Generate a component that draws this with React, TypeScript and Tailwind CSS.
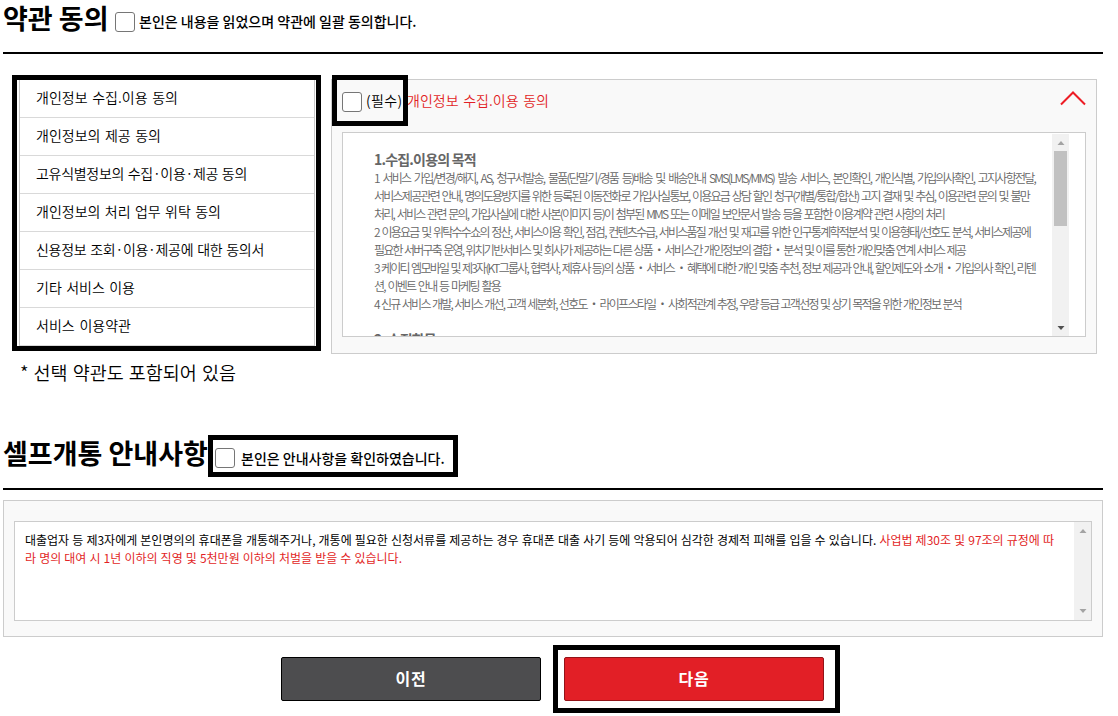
import { useState } from 'react';
import clsx from 'clsx';

const terms = [
  { label: '개인정보 수집.이용 동의', width: 'w-[142px]' },
  { label: '개인정보의 제공 동의', width: 'w-[125px]' },
  { label: '고유식별정보의 수집·이용·제공 동의', width: 'w-[211px] tracking-[-0.3px]' },
  { label: '개인정보의 처리 업무 위탁 동의', width: 'w-[185px]' },
  { label: '신용정보 조회·이용·제공에 대한 동의서', width: 'w-[228px] tracking-[-0.3px]' },
  { label: '기타 서비스 이용', width: 'w-[99px]' },
  { label: '서비스 이용약관', width: 'w-[95px]' },
];

const purposeLines = [
  { text: '1 서비스 가입/변경/해지, AS, 청구서발송, 물품(단말기/경품 등)배송 및 배송안내 SMS(LMS/MMS) 발송 서비스, 본인확인, 개인식별, 가입의사확인, 고지사항전달,', width: 'w-[661px]' },
  { text: '서비스제공관련 안내, 명의도용방지를 위한 등록된 이동전화로 가입사실통보, 이용요금 상담 할인 청구(개별/통합/합산) 고지 결재 및 추심, 이용관련 문의 및 불만', width: 'w-[655px]' },
  { text: '처리, 서비스 관련 문의, 가입사실에 대한 사본(이미지 등)이 첨부된 MMS 또는 이메일 보안문서 발송 등을 포함한 이용계약 관련 사항의 처리', width: 'w-[570px]' },
  { text: '2 이용요금 및 위탁수수쇼의 정산, 서비스이용 확인, 점검, 컨텐츠수급, 서비스품질 개선 및 재고를 위한 인구통계학적분석 및 이용형태/선호도 분석, 서비스제공에', width: 'w-[656px]' },
  { text: '필요한 서버구축 운영, 위치기반서비스 및 회사가 제공하는 다른 상품・서비스간 개인정보의 결합・분석 및 이를 통한 개인맞춤 연계 서비스 제공', width: 'w-[591px]' },
  { text: '3 케이티 엠모바일 및 제3자(KT그룹사, 협력사, 제휴사 등)의 상품・서비스・혜택에 대한 개인 맞춤 추천, 정보 제공과 안내, 할인제도와 소개・가입의사 확인, 리텐', width: 'w-[661px]' },
  { text: '션, 이벤트 안내 등 마케팅 활용', width: 'w-[126px]' },
  { text: '4 신규 서비스 개발, 서비스 개선, 고객 세분화, 선호도・라이프스타일・사회적관계 추정, 우량 등급 고객선정 및 상기 목적을 위한 개인정보 분석', width: 'w-[587px]' },
];

function Checkbox({ className, label }: { className?: string; label: string }) {
  const [checked, setChecked] = useState(false);
  return (
    <input
      type="checkbox"
      aria-label={label}
      checked={checked}
      onChange={() => setChecked(!checked)}
      className={clsx(
        'size-5 shrink-0 appearance-none rounded-[3px] border border-[#767676] bg-white checked:bg-[#e21f26]',
        className
      )}
    />
  );
}

function Arrow({ down, color }: { down?: boolean; color: string }) {
  return (
    <svg width="8" height="4" viewBox="0 0 8 4" className={color} fill="currentColor">
      <path d={down ? 'M0.5 0h7L4 4z' : 'M0.5 4h7L4 0z'} />
    </svg>
  );
}

export default function App() {
  return (
    <div className="h-[716px] w-[1118px] overflow-hidden bg-white pl-[3px] font-['Noto_Sans_CJK_KR',sans-serif] text-black">
      {/* Terms agreement */}
      <header className="flex h-[54px] w-[1100px] items-start border-b-2 border-black whitespace-nowrap">
        <h1 className="w-[112px] text-[27px] leading-[35px] font-bold">약관 동의</h1>
        <Checkbox className="mt-3" label="전체 동의" />
        <span className="mt-[10px] ml-1 text-[14px] leading-[22px] font-medium">
          본인은 내용을 읽었으며 약관에 일괄 동의합니다.
        </span>
      </header>

      <div className="mt-[21px] ml-[9px] flex h-[279px]">
        <nav className="h-[276px] w-[309px] border-[5px] border-black pr-px pl-[2px]">
          <ul className="h-[266px] border-x border-[#c8c8c8]">
            {terms.map((term) => (
              <li
                key={term.label}
                className="flex h-[38px] items-center border-b border-[#d9d9d9] pb-0.5 pl-4 text-[14px] font-[350] whitespace-nowrap"
              >
                <span className={clsx('[text-align-last:justify]', term.width)}>{term.label}</span>
              </li>
            ))}
          </ul>
        </nav>

        <section className="relative mt-1 ml-[10px] h-[275px] w-[766px] border border-[#ccc] bg-[#f9f9f9] px-[10px]">
          <div className="flex h-[52px] items-start text-[14px] leading-[22px] whitespace-nowrap">
            <Checkbox className="mt-3" label="필수 동의" />
            <span className="mt-[9px] ml-1 w-[41px] font-[350] tracking-[0.4px]">(필수)</span>
            <span className="mt-[9px] w-[142px] font-[350] text-[#e21f26] [text-align-last:justify]">
              개인정보 수집.이용 동의
            </span>
            <svg className="mt-[10px] ml-auto" width="26" height="16" viewBox="0 0 26 16" fill="none">
              <path d="M1 14.5 13 2.5l12 12" stroke="#ed1c24" strokeWidth="2" />
            </svg>
          </div>
          <div className="absolute -top-[5px] left-0 h-[51px] w-[76px] border-[5px] border-black" />

          <div className="flex h-[205px] overflow-hidden border border-[#ccc] bg-white pt-px pr-4 pl-[31px]">
            <div className="flex-1 pt-4 text-[12px] leading-[18px] font-[350] tracking-[-1.75px] whitespace-nowrap text-[#666]">
              <h2 className="mb-px text-[14px] font-bold tracking-[-0.8px]">1.수집.이용의 목적</h2>
              {purposeLines.map((line) => (
                <p key={line.text} className={clsx('[text-align-last:justify]', line.width)}>
                  {line.text}
                </p>
              ))}
              <h2 className="mt-[17px] text-[14px] font-bold tracking-[-0.8px]">2. 수집항목</h2>
            </div>
            <div className="flex h-[202px] w-[17px] flex-col items-center bg-[#f1f1f1]">
              <div className="flex h-[17px] items-center">
                <Arrow color="text-[#a3a3a3]" />
              </div>
              <div className="h-[75px] w-[13px] bg-[#c1c1c1]" />
              <div className="mt-auto flex h-[17px] items-center">
                <Arrow down color="text-[#505050]" />
              </div>
            </div>
          </div>
        </section>
      </div>

      <p className="mt-1 ml-[17px] w-[216px] text-[18.5px] leading-[28px] font-[350] whitespace-nowrap [text-align-last:justify]">
        * 선택 약관도 포함되어 있음
      </p>

      {/* Self activation notice */}
      <header className="mt-[49px] flex h-[55px] w-[1100px] items-start border-b-2 border-black whitespace-nowrap">
        <h1 className="w-[205px] text-[27px] leading-[36px] font-bold">셀프개통 안내사항</h1>
        <div className="flex h-[42px] w-[250px] items-start border-[5px] border-black pl-[2px]">
          <Checkbox className="mt-2" label="안내사항 확인" />
          <span className="mt-[7px] ml-[6px] text-[14px] leading-[22px] font-medium">
            본인은 안내사항을 확인하였습니다.
          </span>
        </div>
      </header>

      <section className="mt-[10px] h-[137px] w-[1100px] border border-[#ccc] bg-[#f9f9f9] px-[10px] pt-5">
        <div className="flex h-[100px] justify-between border border-[#ccc] bg-white">
          <div className="pt-[9px] pl-[10px] text-[12px] leading-[18px] whitespace-nowrap">
            <p className="w-[1029px] [text-align-last:justify]">
              대출업자 등 제3자에게 본인명의의 휴대폰을 개통해주거나, 개통에 필요한 신청서류를 제공하는 경우 휴대폰
              대출 사기 등에 악용되어 심각한 경제적 피해를 입을 수 있습니다.{' '}
              <span className="text-[#e21f26]">사업법 제30조 및 97조의 규정에 따</span>
            </p>
            <p className="w-[377px] text-[#e21f26] [text-align-last:justify]">
              라 명의 대여 시 1년 이하의 직영 및 5천만원 이하의 처벌을 받을 수 있습니다.
            </p>
          </div>
          <div className="flex w-[17px] flex-col items-center justify-between bg-[#f1f1f1] py-[7px]">
            <Arrow color="text-[#a3a3a3]" />
            <Arrow down color="text-[#a3a3a3]" />
          </div>
        </div>
      </section>

      <div className="mt-2 ml-[278px] flex text-[16px] font-bold tracking-[0.8px] text-white">
        <button className="mt-3 h-[44px] w-[260px] rounded-[2px] border border-black bg-[#4d4d4f] pb-0.5">이전</button>
        <div className="ml-3 h-[68px] w-[287px] border-[5px] border-black pt-[7px] pl-[6px]">
          <button className="h-[44px] w-[260px] rounded-[2px] border border-[#931318] bg-[#e21f26] pb-0.5">다음</button>
        </div>
      </div>
    </div>
  );
}
